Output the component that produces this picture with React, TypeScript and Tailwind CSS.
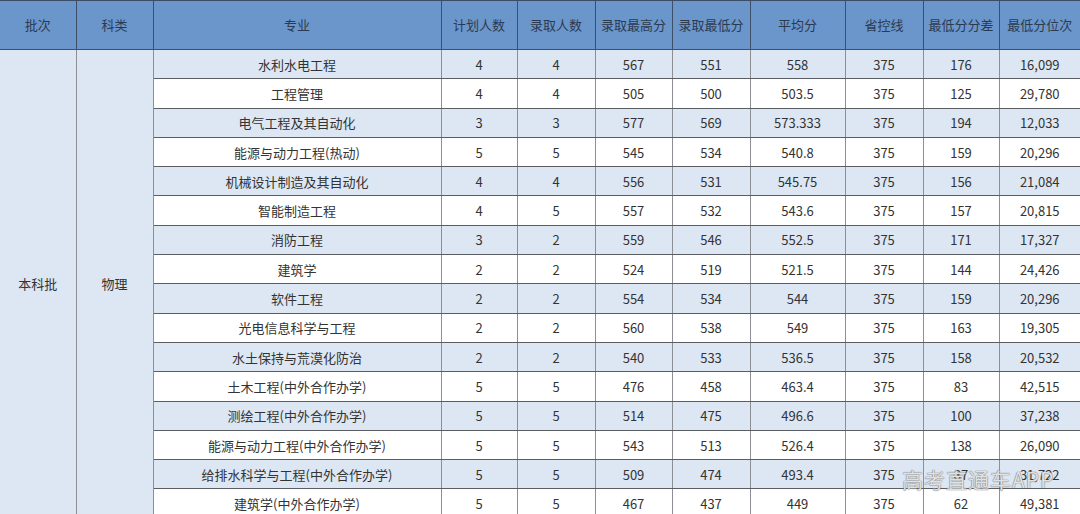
import React from 'react';

const cols = [76, 77, 288, 76, 78, 77, 78, 95, 78, 76, 81];

const headers = ['批次', '科类', '专业', '计划人数', '录取人数', '录取最高分', '录取最低分', '平均分', '省控线', '最低分分差', '最低分位次'];

const rows: string[][] = [
  ['水利水电工程', '4', '4', '567', '551', '558', '375', '176', '16,099'],
  ['工程管理', '4', '4', '505', '500', '503.5', '375', '125', '29,780'],
  ['电气工程及其自动化', '3', '3', '577', '569', '573.333', '375', '194', '12,033'],
  ['能源与动力工程(热动)', '5', '5', '545', '534', '540.8', '375', '159', '20,296'],
  ['机械设计制造及其自动化', '4', '4', '556', '531', '545.75', '375', '156', '21,084'],
  ['智能制造工程', '4', '5', '557', '532', '543.6', '375', '157', '20,815'],
  ['消防工程', '3', '2', '559', '546', '552.5', '375', '171', '17,327'],
  ['建筑学', '2', '2', '524', '519', '521.5', '375', '144', '24,426'],
  ['软件工程', '2', '2', '554', '534', '544', '375', '159', '20,296'],
  ['光电信息科学与工程', '2', '2', '560', '538', '549', '375', '163', '19,305'],
  ['水土保持与荒漠化防治', '2', '2', '540', '533', '536.5', '375', '158', '20,532'],
  ['土木工程(中外合作办学)', '5', '5', '476', '458', '463.4', '375', '83', '42,515'],
  ['测绘工程(中外合作办学)', '5', '5', '514', '475', '496.6', '375', '100', '37,238'],
  ['能源与动力工程(中外合作办学)', '5', '5', '543', '513', '526.4', '375', '138', '26,090'],
  ['给排水科学与工程(中外合作办学)', '5', '5', '509', '474', '493.4', '375', '87', '31,722'],
  ['建筑学(中外合作办学)', '5', '5', '467', '437', '449', '375', '62', '49,381'],
];

export default function App() {
  return (
    <div
      className="relative w-[1080px] h-[514px] overflow-hidden bg-white text-[13px] text-[#333]"
      style={{ fontFamily: '"Noto Sans CJK SC", "Noto Sans", sans-serif' }}
    >
      <table className="table-fixed border-collapse w-[1080px] border-t border-t-[#3d4d66]">
        <colgroup>
          {cols.map((w, i) => (
            <col key={i} style={{ width: w }} />
          ))}
        </colgroup>
        <thead>
          <tr className="h-[49px] bg-[#6b96cc]">
            {headers.map((h) => (
              <th
                key={h}
                className="p-0 font-normal text-[#2c3a50] text-center border-r border-b border-r-[#3f4f68] border-b-[#3f4f68] last:border-r-0"
              >
                {h}
              </th>
            ))}
          </tr>
        </thead>
        <tbody>
          {rows.map((r, i) => (
            <tr key={i} className={`h-[29.3px] ${i % 2 === 0 ? 'bg-[#dde7f4]' : 'bg-white'}`}>
              {i === 0 && (
                <>
                  <td rowSpan={rows.length} className="bg-[#dde7f4] text-center border-r border-r-[#8c8f94]">
                    本科批
                  </td>
                  <td rowSpan={rows.length} className="bg-[#dde7f4] text-center border-r border-r-[#8c8f94]">
                    物理
                  </td>
                </>
              )}
              {r.map((c, j) => (
                <td
                  key={j}
                  className="p-0 text-center leading-none border-b border-r border-b-[#5a5d62] border-r-[#8c8f94] last:border-r-0"
                >
                  {c}
                </td>
              ))}
            </tr>
          ))}
        </tbody>
      </table>
      {/* watermark over the table */}
      <div
        className="absolute left-[902px] top-[464px] text-[21px] tracking-[1px] text-white/80"
        style={{ textShadow: '0 0 1px #666, 0 0 1px #666' }}
      >
        高考直通车APP
      </div>
    </div>
  );
}
